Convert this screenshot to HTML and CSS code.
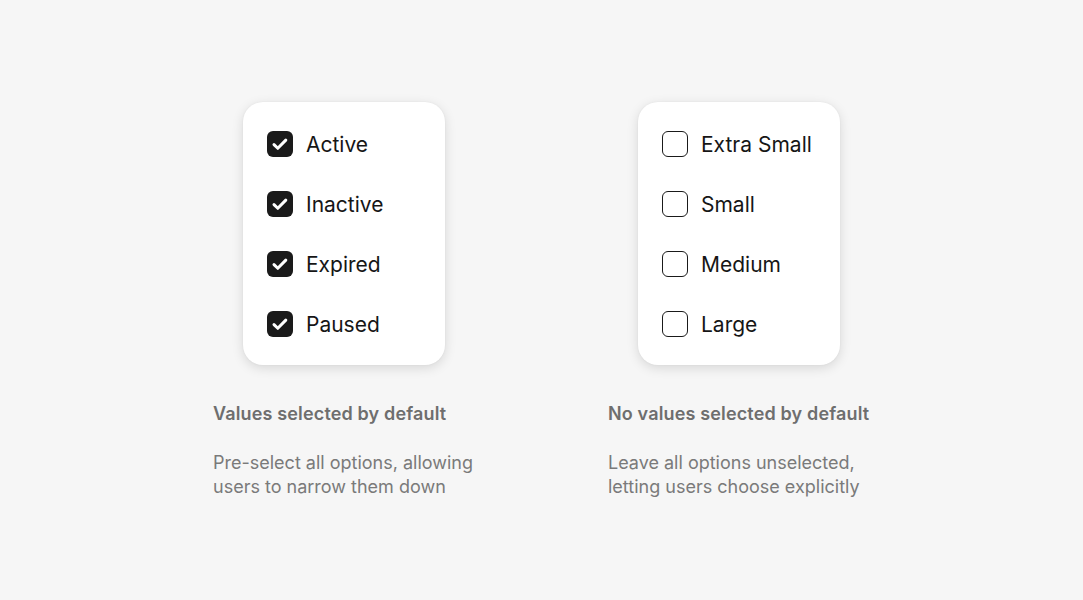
FILE: index.html
```html
<!DOCTYPE html>
<html>
<head>
<meta charset="utf-8">
<link rel="stylesheet" href="styles.css">
</head>
<body>
<main class="page">
  <section class="col">
    <div class="card">
      <div class="row"><span class="box checked"><svg viewBox="0 0 26 26"><path d="M7 13.6l3.8 3.7 8-8.2" /></svg></span><span class="label">Active</span></div>
      <div class="row"><span class="box checked"><svg viewBox="0 0 26 26"><path d="M7 13.6l3.8 3.7 8-8.2" /></svg></span><span class="label">Inactive</span></div>
      <div class="row"><span class="box checked"><svg viewBox="0 0 26 26"><path d="M7 13.6l3.8 3.7 8-8.2" /></svg></span><span class="label">Expired</span></div>
      <div class="row"><span class="box checked"><svg viewBox="0 0 26 26"><path d="M7 13.6l3.8 3.7 8-8.2" /></svg></span><span class="label">Paused</span></div>
    </div>
    <h2 class="title">Values selected by default</h2>
    <p class="desc">Pre-select all options, allowing<br>users to narrow them down</p>
  </section>
  <section class="col">
    <div class="card">
      <div class="row"><span class="box"></span><span class="label">Extra Small</span></div>
      <div class="row"><span class="box"></span><span class="label">Small</span></div>
      <div class="row"><span class="box"></span><span class="label">Medium</span></div>
      <div class="row"><span class="box"></span><span class="label">Large</span></div>
    </div>
    <h2 class="title">No values selected by default</h2>
    <p class="desc">Leave all options unselected,<br>letting users choose explicitly</p>
  </section>
</main>
</body>
</html>
```
FILE: styles.css
```css
html, body {
  margin: 0;
  padding: 0;
  background: #f6f6f6;
  font-family: Inter, "Noto Sans", sans-serif;
}
.page {
  display: flex;
  padding: 102px 0 0 213px;
}
.col {
  width: 395px;
  display: flex;
  flex-direction: column;
}
.card {
  margin-left: 30px;
  width: 202px;
  box-sizing: border-box;
  height: 263px;
  background: #fff;
  border-radius: 20px;
  box-shadow: 0 3px 12px rgba(0,0,0,0.13), 0 0 2px rgba(0,0,0,0.05);
  padding: 29px 24px 0 24px;
  display: flex;
  flex-direction: column;
  gap: 34px;
}
.row {
  display: flex;
  align-items: center;
  height: 26px;
  gap: 13px;
}
.box {
  width: 26px;
  height: 26px;
  box-sizing: border-box;
  border: 1.5px solid #1a1a1a;
  border-radius: 6px;
  flex: none;
  display: flex;
}
.box.checked {
  background: #1a1a1a;
  border: none;
}
.box svg {
  width: 26px;
  height: 26px;
}
.box svg path {
  fill: none;
  stroke: #fff;
  stroke-width: 3;
  stroke-linecap: round;
  stroke-linejoin: round;
}
.label {
  font-size: 21px;
  color: #161616;
  letter-spacing: 0;
}
.title {
  margin: 38px 0 0 0;
  font-size: 18px;
  font-weight: 600;
  color: #6e6e6e;
  line-height: 22px;
  letter-spacing: 0.15px;
}
.desc {
  margin: 26px 0 0 0;
  font-size: 18px;
  line-height: 24px;
  color: #7a7a7a;
}
```
